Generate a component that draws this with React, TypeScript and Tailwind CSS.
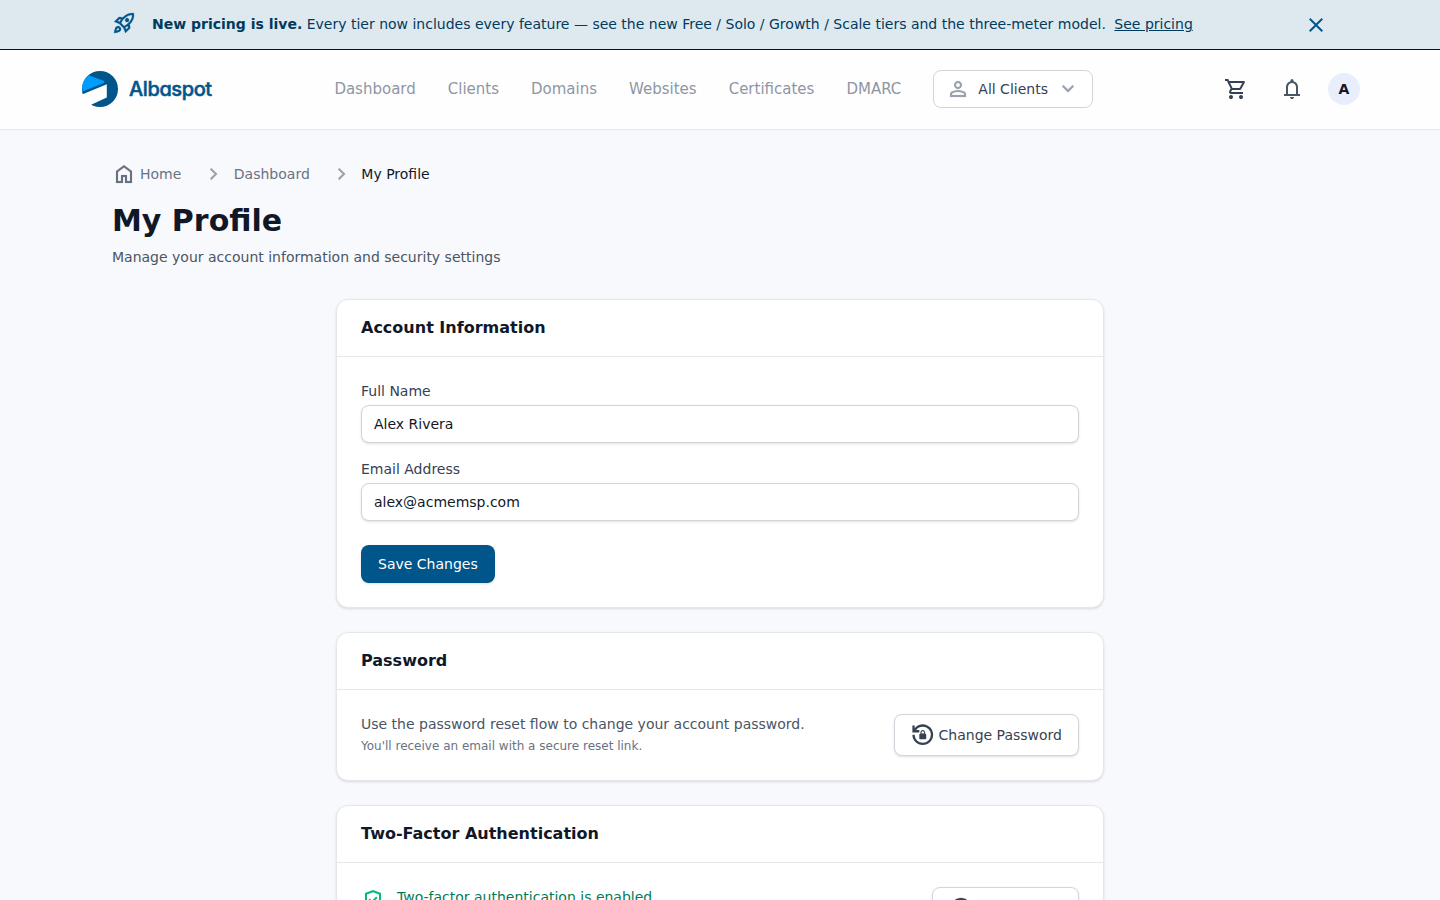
import { ReactNode } from "react";

const icons = {
  rocket:
    "m226-559 78 33q14-28 29-54t33-52l-56-11-84 84Zm142 83 114 113q42-16 90-49t90-75q70-70 109.5-155.5T806-800q-72-5-158 34.5T492-656q-42 42-75 90t-49 90Zm178-65q-23-23-23-56.5t23-56.5q23-23 57-23t57 23q23 23 23 56.5T660-541q-23 23-57 23t-57-23Zm19 321 84-84-11-56q-26 18-52 32.5T532-299l33 79Zm313-653q19 121-23.5 235.5T708-419l20 99q4 20-2 39t-20 33L538-80l-84-197-171-171-197-84 167-168q14-14 33.5-20t39.5-2l99 20q104-104 218-147t235-24ZM157-321q35-35 85.5-35.5T328-322q35 35 34.5 85.5T327-151q-25 25-83.5 43T82-76q14-103 32-161.5t43-83.5Zm57 56q-10 10-20 36.5T180-175q27-4 53.5-13.5T270-208q12-12 13-29t-11-29q-12-12-29-11.5T214-265Z",
  close:
    "m256-200-56-56 224-224-224-224 56-56 224 224 224-224 56 56-224 224 224 224-56 56-224-224-224 224Z",
  person:
    "M480-480q-66 0-113-47t-47-113q0-66 47-113t113-47q66 0 113 47t47 113q0 66-47 113t-113 47ZM160-160v-112q0-34 17.5-62.5T224-378q62-31 126-46.5T480-440q66 0 130 15.5T736-378q29 15 46.5 43.5T800-272v112H160Zm80-80h480v-32q0-11-5.5-20T700-306q-54-27-109-40.5T480-360q-56 0-111 13.5T260-306q-9 5-14.5 14t-5.5 20v32Zm240-320q33 0 56.5-23.5T560-640q0-33-23.5-56.5T480-720q-33 0-56.5 23.5T400-640q0 33 23.5 56.5T480-560Z",
  down: "M480-344 240-584l56-56 184 184 184-184 56 56-240 240Z",
  right: "M504-480 320-664l56-56 240 240-240 240-56-56 184-184Z",
  cart: "M280-80q-33 0-56.5-23.5T200-160q0-33 23.5-56.5T280-240q33 0 56.5 23.5T360-160q0 33-23.5 56.5T280-80Zm400 0q-33 0-56.5-23.5T600-160q0-33 23.5-56.5T680-240q33 0 56.5 23.5T760-160q0 33-23.5 56.5T680-80ZM246-720l96 200h280l110-200H246Zm-38-80h590q23 0 35 20.5t1 41.5L692-482q-11 20-29.5 31T622-440H324l-44 80h480v80H280q-45 0-68-39.5t-2-78.5l54-98-144-304H40v-80h130l38 80Z",
  bell: "M160-200v-80h80v-280q0-83 50-147.5T420-792v-28q0-25 17.5-42.5T480-880q25 0 42.5 17.5T540-820v28q80 20 130 84.5T720-560v280h80v80H160Zm320 120q-33 0-56.5-23.5T400-160h160q0 33-23.5 56.5T480-80ZM320-280h320v-280q0-66-47-113t-113-47q-66 0-113 47t-47 113v280Z",
  home: "M240-200h120v-240h240v240h120v-360L480-740 240-560v360Zm-80 80v-480l320-240 320 240v480H520v-240h-80v240H160Z",
  lockReset:
    "M480-120q-75 0-140.5-28T225-225q-49-49-77-114.5T120-480h80q0 117 81.5 198.5T480-200q117 0 198.5-81.5T760-480q0-117-81.5-198.5T480-760q-69 0-129 32t-101 88h110v80H120v-240h80v94q51-64 124.5-99T480-840q75 0 140.5 28.5t114 77q48.5 48.5 77 114T840-480q0 75-28.5 140.5t-77 114q-48.5 48.5-114 77T480-120Zm-80-200q-17 0-28.5-11.5T360-360v-120q0-17 11.5-28.5T400-520v-40q0-33 23.5-56.5T480-640q33 0 56.5 23.5T560-560v40q17 0 28.5 11.5T600-480v120q0 17-11.5 28.5T560-320H400Zm40-200h80v-40q0-17-11.5-28.5T480-600q-17 0-28.5 11.5T440-560v40Z",
  shield:
    "m438-338 226-226-57-57-169 169-84-84-57 57 141 141Zm42 258q-139-35-229.5-159.5T160-516v-244l320-120 320 120v244q0 152-90.5 276.5T480-80Zm0-84q104-33 172-132t68-220v-189l-240-90-240 90v189q0 121 68 220t172 132Z",
  block:
    "M480-80q-83 0-156-31.5T197-197q-54-54-85.5-127T80-480q0-83 31.5-156T197-763q54-54 127-85.5T480-880q83 0 156 31.5T763-763q54 54 85.5 127T880-480q0 83-31.5 156T763-197q-54 54-127 85.5T480-80Zm0-80q54 0 104-17.5t92-50.5L228-676q-33 42-50.5 92T160-480q0 134 93 227t227 93Zm252-124q33-42 50.5-92T800-480q0-134-93-227t-227-93q-54 0-104 17.5T284-732l448 448Z",
};

function Icon({
  name,
  className,
  bold = 0,
  viewBox = "0 -960 960 960",
}: {
  name: keyof typeof icons;
  className?: string;
  bold?: number;
  viewBox?: string;
}) {
  return (
    <svg
      viewBox={viewBox}
      fill="currentColor"
      stroke="currentColor"
      strokeWidth={bold}
      className={`size-6 shrink-0 ${className ?? ""}`}
    >
      <path d={icons[name]} />
    </svg>
  );
}

function Logo() {
  return (
    <a href="#" className="flex items-center">
      <svg viewBox="0 0 40 40" className="size-10">
        <circle cx="20" cy="20" r="18" fill="#00558a" />
        <path
          d="M8.6 6.2 L24.2 12 L24 14 L2.4 22.6 A18 18 0 0 1 8.6 6.2Z"
          fill="#009dff"
        />
        <path
          d="M0 26.5 L2.6 25.2 L26.8 15.2 V28.6 L10.6 36 L8 40 H0Z"
          fill="#fefefe"
        />
      </svg>
      <span className="ml-2 whitespace-nowrap pl-px font-['Inter',sans-serif] text-[20px] font-medium leading-6 tracking-[-0.4px] text-[#00558a] [font-feature-settings:'cv11'] [-webkit-text-stroke:0.5px_#00558a]">
        Albaspot
      </span>
    </a>
  );
}

function Card({ title, children }: { title: string; children: ReactNode }) {
  return (
    <section className="rounded-xl border border-gray-200 bg-white shadow-sm">
      <div className="border-b border-gray-200 px-6 py-4">
        <h2 className="text-base font-bold text-gray-900">{title}</h2>
      </div>
      <div className="p-6">{children}</div>
    </section>
  );
}

function Field({ label, value }: { label: string; value: string }) {
  return (
    <label className="block text-sm text-gray-700">
      {label}
      <input
        defaultValue={value}
        className="mt-1 block h-[38px] w-full rounded-lg border border-gray-300 bg-white px-3 text-sm text-gray-900 shadow-sm outline-none"
      />
    </label>
  );
}

function OutlineButton({
  icon,
  children,
}: {
  icon: ReactNode;
  children: ReactNode;
}) {
  return (
    <button className="flex h-[42px] shrink-0 items-center gap-1 whitespace-nowrap rounded-lg border border-gray-300 bg-white px-4 text-sm text-gray-700 shadow-sm">
      {icon}
      {children}
    </button>
  );
}

const links = [
  "Dashboard",
  "Clients",
  "Domains",
  "Websites",
  "Certificates",
  "DMARC",
];

export default function App() {
  return (
    <div className="h-screen overflow-hidden bg-[#f8f9fd] font-['DejaVu_Sans',sans-serif]">
      <div className="flex h-[50px] items-center border-b border-[#0b1220] bg-[#dee9ef] px-28 text-sm text-[#003a5d]">
        <Icon name="rocket" bold={10} className="-mt-[3px] text-[#00558a]" />
        <p className="ml-4 whitespace-nowrap pb-px">
          <strong>New pricing is live.</strong> Every tier now includes every
          feature — see the new Free / Solo / Growth / Scale tiers and the
          three-meter model.
          <a href="#" className="ml-[8.5px] underline">
            See pricing
          </a>
        </p>
        <button className="ml-auto text-[#00558a]">
          <Icon name="close" />
        </button>
      </div>

      <header className="flex h-20 items-center border-b border-gray-200 bg-[#fefefe] px-20 pb-px">
        <Logo />
        <nav className="ml-auto flex items-center gap-8 text-[15px] text-[#8f96a3]">
          {links.map((link) => (
            <a key={link} href="#">
              {link}
            </a>
          ))}
          <button className="flex h-[38px] w-40 items-center rounded-lg border border-gray-300 bg-white px-3 text-sm text-gray-700">
            <Icon name="person" bold={6} className="text-gray-400" />
            <span className="ml-2 whitespace-nowrap">All Clients</span>
            <Icon name="down" bold={6} className="ml-2 text-gray-400" />
          </button>
        </nav>
        <div className="ml-[130.7px] flex items-center text-gray-700">
          <Icon name="cart" />
          <Icon name="bell" className="ml-8 text-gray-600" />
          <span className="ml-6 flex size-8 items-center justify-center rounded-full bg-[#e8eefb] text-sm font-bold text-gray-900">
            A
          </span>
        </div>
      </header>

      <main className="px-28 pt-8">
        <div className="flex h-6 items-center text-sm text-gray-500">
          <Icon name="home" bold={6} />
          <a href="#" className="ml-1">
            Home
          </a>
          <Icon
            name="right"
            bold={6}
            className="ml-[20.5px] mr-2 text-gray-400"
          />
          <a href="#">Dashboard</a>
          <Icon
            name="right"
            bold={6}
            className="ml-5 mr-[7.5px] text-gray-400"
          />
          <span className="text-gray-900">My Profile</span>
        </div>
        <h1 className="mt-[17px] text-3xl font-bold text-gray-900">
          My Profile
        </h1>
        <p className="mt-2 text-sm text-gray-600">
          Manage your account information and security settings
        </p>

        <div className="mx-auto mt-8 flex max-w-3xl flex-col gap-6">
          <Card title="Account Information">
            <div className="space-y-4">
              <Field label="Full Name" value="Alex Rivera" />
              <Field label="Email Address" value="alex@acmemsp.com" />
            </div>
            <button className="mt-6 block h-[38px] rounded-lg bg-[#00558a] px-[17px] text-sm text-white shadow-sm">
              Save Changes
            </button>
          </Card>

          <Card title="Password">
            <div className="flex justify-between">
              <div>
                <p className="text-sm text-gray-600">
                  Use the password reset flow to change your account password.
                </p>
                <p className="mt-1 text-xs text-gray-500">
                  You'll receive an email with a secure reset link.
                </p>
              </div>
              <OutlineButton
                icon={<Icon name="lockReset" viewBox="72 -886 832 832" />}
              >
                Change Password
              </OutlineButton>
            </div>
          </Card>

          <Card title="Two-Factor Authentication">
            <div className="flex justify-between">
              <div className="flex items-start">
                <Icon name="shield" className="mt-px text-emerald-500" />
                <p className="ml-3 text-sm text-emerald-700">
                  Two-factor authentication is enabled
                </p>
              </div>
              <OutlineButton icon={<Icon name="block" bold={10} />}>
                <span className="w-[85px] text-left">Disable 2FA</span>
              </OutlineButton>
            </div>
          </Card>
        </div>
      </main>
    </div>
  );
}
